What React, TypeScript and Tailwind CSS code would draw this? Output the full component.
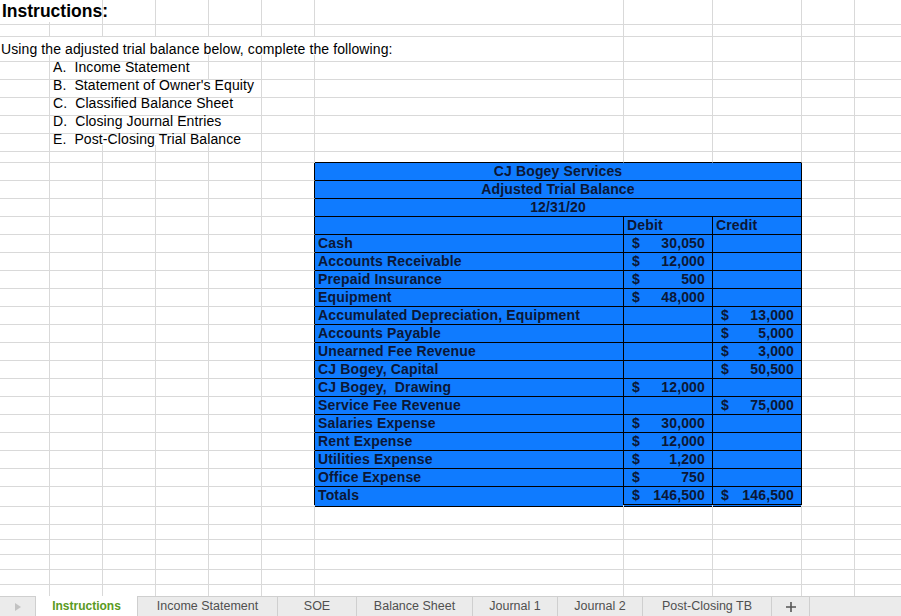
import { ReactNode } from "react";

// column widths: 50 53 53 53 53 53 309 89 89 53 53
const GRID = "grid grid-cols-[50px_53px_53px_53px_53px_53px_309px_89px_89px_53px_53px]";
const NCOLS = 11;
const SPAN: Record<number, string> = {
  1: "col-span-1",
  2: "col-span-2",
  3: "col-span-3",
  4: "col-span-4",
  5: "col-span-5",
  6: "col-span-6",
  7: "col-span-7",
};

type Cell = {
  c: number;
  span?: number;
  node?: ReactNode;
  cls?: string;
  right?: "black" | "none";
  bottom?: "black" | "double";
};

function SheetRow({ h, cells }: { h: string; cells: Cell[] }) {
  const out: ReactNode[] = [];
  let c = 0;
  while (c < NCOLS) {
    const cell = cells.find((x) => x.c === c);
    const span = cell?.span ?? 1;
    const rc =
      cell?.right === "black" ? "border-r-black" : cell?.right === "none" ? "border-r-transparent" : "border-r-[#d9d9d9]";
    const bc =
      cell?.bottom === "black"
        ? "border-b-black"
        : cell?.bottom === "double"
        ? "border-b-[3px] border-double border-b-black"
        : "border-b-[#d9d9d9]";
    out.push(
      <div key={c} className={`${SPAN[span]} border-r border-b ${rc} ${bc} whitespace-pre min-w-0 ${cell?.cls ?? ""}`}>
        {cell?.node}
      </div>
    );
    c += span;
  }
  return <div className={`${GRID} ${h}`}>{out}</div>;
}

const BLUE = "bg-[#0f7bff] text-[#0b1736] font-bold text-[14px] leading-[17px] tracking-[0.15px]";

type Acct = { name: string; debit?: string; credit?: string };

const accounts: Acct[] = [
  { name: "Cash", debit: "30,050" },
  { name: "Accounts Receivable", debit: "12,000" },
  { name: "Prepaid Insurance", debit: "500" },
  { name: "Equipment", debit: "48,000" },
  { name: "Accumulated Depreciation, Equipment", credit: "13,000" },
  { name: "Accounts Payable", credit: "5,000" },
  { name: "Unearned Fee Revenue", credit: "3,000" },
  { name: "CJ Bogey, Capital", credit: "50,500" },
  { name: "CJ Bogey,  Drawing", debit: "12,000" },
  { name: "Service Fee Revenue", credit: "75,000" },
  { name: "Salaries Expense", debit: "30,000" },
  { name: "Rent Expense", debit: "12,000" },
  { name: "Utilities Expense", debit: "1,200" },
  { name: "Office Expense", debit: "750" },
];

function Money({ v }: { v?: string }) {
  if (!v) return null;
  return (
    <div className="flex justify-between pl-[8px] pr-[7px]">
      <span>$</span>
      <span>{v}</span>
    </div>
  );
}

const tasks = [
  { t: "A.  Income Statement", span: 3 },
  { t: "B.  Statement of Owner's Equity", span: 4 },
  { t: "C.  Classified Balance Sheet", span: 4 },
  { t: "D.  Closing Journal Entries", span: 4 },
  { t: "E.  Post-Closing Trial Balance", span: 4 },
];

const tabs = [
  { name: "Instructions", w: "w-[102px]", active: true },
  { name: "Income Statement", w: "w-[140px]" },
  { name: "SOE", w: "w-[79px]" },
  { name: "Balance Sheet", w: "w-[116px]" },
  { name: "Journal 1", w: "w-[85px]" },
  { name: "Journal 2", w: "w-[85px]" },
  { name: "Post-Closing TB", w: "w-[129px]" },
];

export default function App() {
  const tableLeft: Cell = { c: 5, right: "black" };
  return (
    <div className="h-screen w-full flex flex-col bg-white overflow-hidden font-['Liberation_Sans',Arial,sans-serif] text-black">
      <div className="flex-1 overflow-hidden">
        <SheetRow
          h="h-[22px]"
          cells={[
            {
              c: 0,
              span: 2,
              node: <span className="pl-[2px] text-[17.5px] font-bold leading-[21px]">Instructions:</span>,
            },
          ]}
        />
        <SheetRow h="h-[15px]" cells={[]} />
        <SheetRow
          h="h-[18px]"
          cells={[
            {
              c: 0,
              span: 7,
              node: (
                <span className="pl-[1px] text-[14px] leading-[17px] tracking-[0.1px]">
                  Using the adjusted trial balance below, complete the following:
                </span>
              ),
            },
          ]}
        />
        {tasks.map((t) => (
          <SheetRow
            key={t.t}
            h="h-[18px]"
            cells={[
              {
                c: 1,
                span: t.span,
                node: <span className="pl-[3px] text-[14px] leading-[17px] tracking-[0.1px]">{t.t}</span>,
              },
            ]}
          />
        ))}
        <SheetRow
          h="h-[18px]"
          cells={[
            { c: 6, bottom: "black" },
            { c: 7, bottom: "black" },
            { c: 8, bottom: "black" },
          ]}
        />
        {["CJ Bogey Services", "Adjusted Trial Balance", "12/31/20"].map((t) => (
          <SheetRow
            key={t}
            h="h-[18px]"
            cells={[
              tableLeft,
              { c: 6, span: 3, right: "black", bottom: "black", cls: `${BLUE} text-center`, node: t },
            ]}
          />
        ))}
        <SheetRow
          h="h-[18px]"
          cells={[
            tableLeft,
            { c: 6, right: "black", bottom: "black", cls: BLUE },
            { c: 7, right: "black", bottom: "black", cls: `${BLUE} pl-[3px]`, node: "Debit" },
            { c: 8, right: "black", bottom: "black", cls: `${BLUE} pl-[3px]`, node: "Credit" },
          ]}
        />
        {accounts.map((a) => (
          <SheetRow
            key={a.name}
            h="h-[18px]"
            cells={[
              tableLeft,
              { c: 6, right: "black", bottom: "black", cls: `${BLUE} pl-[3px]`, node: a.name },
              { c: 7, right: "black", bottom: "black", cls: BLUE, node: <Money v={a.debit} /> },
              { c: 8, right: "black", bottom: "black", cls: BLUE, node: <Money v={a.credit} /> },
            ]}
          />
        ))}
        <SheetRow
          h="h-[18px]"
          cells={[
            tableLeft,
            { c: 6, right: "black", bottom: "black", cls: `${BLUE} pl-[3px]`, node: "Totals" },
            { c: 7, right: "black", bottom: "double", cls: BLUE, node: <Money v="146,500" /> },
            { c: 8, right: "black", bottom: "double", cls: BLUE, node: <Money v="146,500" /> },
          ]}
        />
        <SheetRow h="h-[20px]" cells={[]} />
        {Array.from({ length: 6 }).map((_, i) => (
          <SheetRow key={i} h="h-[15px]" cells={[]} />
        ))}
      </div>

      <div className="h-[20px] shrink-0 flex bg-[#ebebeb] border-t border-[#cfcfcf] text-[12.5px] text-[#505050]">
        <div className="w-[36px] flex items-center justify-center border-r border-[#cfcfcf]">
          <svg width="8" height="10" viewBox="0 0 8 10">
            <path d="M1 1 L7 5 L1 9 Z" fill="#c2c2c2" />
          </svg>
        </div>
        {tabs.map((t) => (
          <div
            key={t.name}
            className={`${t.w} flex items-center justify-center border-r border-[#cfcfcf] ${
              t.active ? "bg-white text-[#5a9a22] font-bold text-[12px] -mt-px" : ""
            }`}
          >
            {t.name}
          </div>
        ))}
        <div className="w-[38px] flex items-center justify-center border-r border-[#cfcfcf]">
          <svg width="12" height="12" viewBox="0 0 12 12">
            <path d="M6 1 V11 M1 6 H11" stroke="#555" strokeWidth="1.6" />
          </svg>
        </div>
        <div className="flex-1" />
      </div>
    </div>
  );
}
